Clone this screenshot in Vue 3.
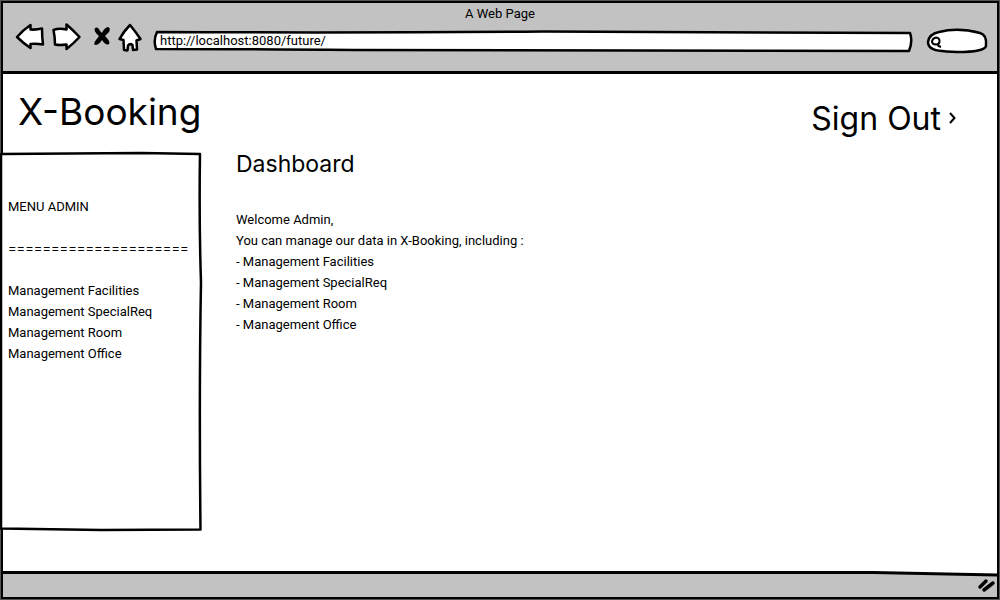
<script setup>
import { ref } from 'vue'

const address = ref('http://localhost:8080/future/')
const query = ref('')
const sections = [
  'Management Facilities',
  'Management SpecialReq',
  'Management Room',
  'Management Office',
]
</script>

<template>
  <div class="browser">
    <header class="chrome">
      <div class="title">A Web Page</div>
      <div class="toolbar">
        <button type="button" class="tool" aria-label="Back">
          <svg width="28" height="28" viewBox="0 0 28 28">
            <path class="shape" d="M1 13 Q7 6 14.500 1 L14.500 5.500 Q20 6 26 4.500 Q26 13 27 20.500 Q21 19.500 14.500 20 L14.500 24 Q7 19 1 13 Z" />
          </svg>
        </button>
        <button type="button" class="tool forward" aria-label="Forward">
          <svg width="30" height="28" viewBox="0 0 30 28">
            <path class="shape" d="M1.500 6 Q7 4 14.500 5.500 L14.500 0.500 Q21 6 27.500 13 Q21 20 14.500 25 L14.500 20.500 Q8 21.500 3 20.500 Q3 13 1.500 6 Z" />
          </svg>
        </button>
        <button type="button" class="tool stop" aria-label="Stop">
          <svg width="18" height="20" viewBox="0 0 18 20">
            <path d="M2 0 Q5 -2 7 3 L9 5 Q11 0 15 -1 Q18 0 16 4 L12 8 Q18 14 16 16 Q13 18 9 12 Q6 17 2 17 Q0 16 3 12 L6 8 Q0 3 2 0 Z" />
          </svg>
        </button>
        <button type="button" class="tool home" aria-label="Home">
          <svg width="24" height="29" viewBox="0 0 24 29">
            <path class="shape" d="M12 1 Q17 7 22.500 15 L18.500 16.500 L19 25.500 L15 26 L14.500 21 Q12 19 10 21.500 L9.500 26.500 L6 26 L5.500 16 L1.500 15 Q6 7 12 1 Z" />
          </svg>
        </button>
        <label class="address">
          <svg class="sketch" viewBox="0 0 760 22" preserveAspectRatio="none" aria-hidden="true">
            <path class="shape" d="M4 2 Q200 3 390 1.500 Q560 3 757 3 Q760 11 756 21 Q380 21 200 20 Q90 19 3 19 Q0 10 4 2 Z" />
          </svg>
          <input v-model="address" type="text" aria-label="Address">
        </label>
        <label class="search">
          <svg class="sketch" viewBox="0 0 62 26" preserveAspectRatio="none" aria-hidden="true">
            <path class="shape" d="M13 4 Q32 -1 54 5 Q61 7 60 17 Q61 23 38 24 Q24 24 16 23 Q2 22 2 14 Q3 6 13 4 Z" />
          </svg>
          <svg class="lens" width="12" height="12" viewBox="0 0 12 12" aria-hidden="true">
            <path d="M6 1.500 Q10 2 9.500 6 Q9 8.500 6 8.500 Q2 8.500 2 5 Q3 2 6 1.500 M8 8 L8.500 10 L11 11" />
          </svg>
          <input v-model="query" type="text" aria-label="Search">
        </label>
      </div>
    </header>

    <div class="page">
      <div class="masthead">
        <h1>X-Booking</h1>
        <a class="signout" href="#">Sign Out
          <svg width="8" height="12" viewBox="0 0 8 12" aria-hidden="true">
            <path d="M1 1 L5.500 6 L1 11" />
          </svg>
        </a>
      </div>
      <div class="columns">
        <nav class="menu">
          <svg class="sketch" viewBox="0 0 200 378" preserveAspectRatio="none" aria-hidden="true">
            <path class="shape" d="M0 2 L140 1 L198 2 Q197 70 199 130 Q197 240 198.500 376.500 L100 377 L0 375.500 Z" />
          </svg>
          <p>MENU ADMIN</p>
          <p class="rule">=====================</p>
          <ul>
            <li v-for="section in sections" :key="section"><a href="#">{{ section }}</a></li>
          </ul>
        </nav>
        <main>
          <h2>Dashboard</h2>
          <p>Welcome Admin,</p>
          <p>You can manage our data in X-Booking, including :</p>
          <ul>
            <li v-for="section in sections" :key="section">- {{ section }}</li>
          </ul>
        </main>
      </div>
    </div>

    <footer>
      <svg class="edge" viewBox="0 0 994 6" preserveAspectRatio="none" aria-hidden="true">
        <path class="sky" d="M0 0 H994 V4 L880 2 L0 1 Z" />
        <path class="line" d="M0 1.500 L870 1.500 L994 4" />
      </svg>
      <svg class="grip" width="17" height="14" viewBox="0 0 17 14" aria-hidden="true">
        <path d="M2 10 L8 4 M6 13 L15 6" />
      </svg>
    </footer>
  </div>
</template>

<style>
body {
  margin: 0;
  background: #fff;
}
</style>

<style scoped>
* {
  box-sizing: border-box;
}

.browser {
  display: flex;
  flex-direction: column;
  min-height: 100vh;
  border: 3px solid #000;
  outline: 1px solid #555;
  outline-offset: -1px;
  background: #fff;
  color: #000;
  font: 13px/21px Roboto, "Open Sans", sans-serif;
}

h1, h2, p, ul {
  margin: 0;
  padding: 0;
  font-weight: 400;
}

ul {
  list-style: none;
}

a {
  color: inherit;
  text-decoration: none;
}

h1,
h2,
.rule,
.signout {
  font-family: Inter, "Open Sans", sans-serif;
}

svg {
  display: block;
  overflow: visible;
}

.shape {
  fill: #fff;
  stroke: #000;
  stroke-width: 2.5px;
  stroke-linejoin: round;
  stroke-linecap: round;
  vector-effect: non-scaling-stroke;
}

.chrome {
  height: 71px;
  border-bottom: 3px solid #000;
  background: #c2c2c2;
}

.title {
  text-align: center;
}

.toolbar {
  display: flex;
  align-items: center;
  height: 28px;
  padding: 0 9px 0 13px;
}

.tool {
  flex: none;
  padding: 0;
  border: 0;
  background: none;
}

.forward {
  margin-left: 8px;
}

.stop {
  margin-left: 11px;
}

.home {
  margin-left: 7px;
}

.address {
  position: relative;
  flex: 1;
  height: 22px;
  margin: 6px 13px 0 11px;
}

.search {
  position: relative;
  display: flex;
  align-items: center;
  flex: none;
  width: 62px;
  height: 26px;
  margin-top: 6px;
  padding: 2px 8px 0 4px;
}

.sketch {
  position: absolute;
  inset: 0;
  width: 100%;
  height: 100%;
}

input {
  position: relative;
  display: block;
  width: 100%;
  height: 100%;
  min-width: 0;
  padding: 0 7px 2px;
  border: 0;
  outline: 0;
  background: none;
  color: inherit;
  font: inherit;
}

.lens {
  position: relative;
  flex: none;
}

.lens path,
.signout path {
  fill: none;
  stroke: #000;
  stroke-width: 2px;
}

.page {
  flex: 1;
}

.masthead {
  display: flex;
  justify-content: space-between;
  padding: 14px 40px 0 15px;
  height: 78px;
}

h1 {
  font-size: 37px;
  line-height: 48px;
}

.signout {
  display: flex;
  align-items: center;
  gap: 8px;
  height: 60px;
  font-size: 32px;
}

.columns {
  display: flex;
  align-items: flex-start;
}

.menu {
  position: relative;
  flex: none;
  width: 201px;
  min-height: 379px;
  margin-left: -2px;
  padding: 44px 7px;
}

.menu p,
.menu ul {
  position: relative;
}

.menu .rule {
  margin: 21px 0;
}

main {
  flex: 1;
  padding-left: 34px;
}

h2 {
  margin-bottom: 33px;
  font-size: 23px;
  line-height: 24px;
}

footer {
  position: relative;
  display: flex;
  align-items: center;
  justify-content: flex-end;
  height: 26px;
  padding-right: 2px;
  background: #c2c2c2;
}

.edge {
  position: absolute;
  top: 0;
  left: 0;
  width: 100%;
  height: 6px;
}

.sky {
  fill: #fff;
}

.line {
  fill: none;
  stroke: #000;
  stroke-width: 3px;
}

.grip path {
  fill: none;
  stroke: #000;
  stroke-width: 3.5px;
  stroke-linecap: round;
}
</style>
